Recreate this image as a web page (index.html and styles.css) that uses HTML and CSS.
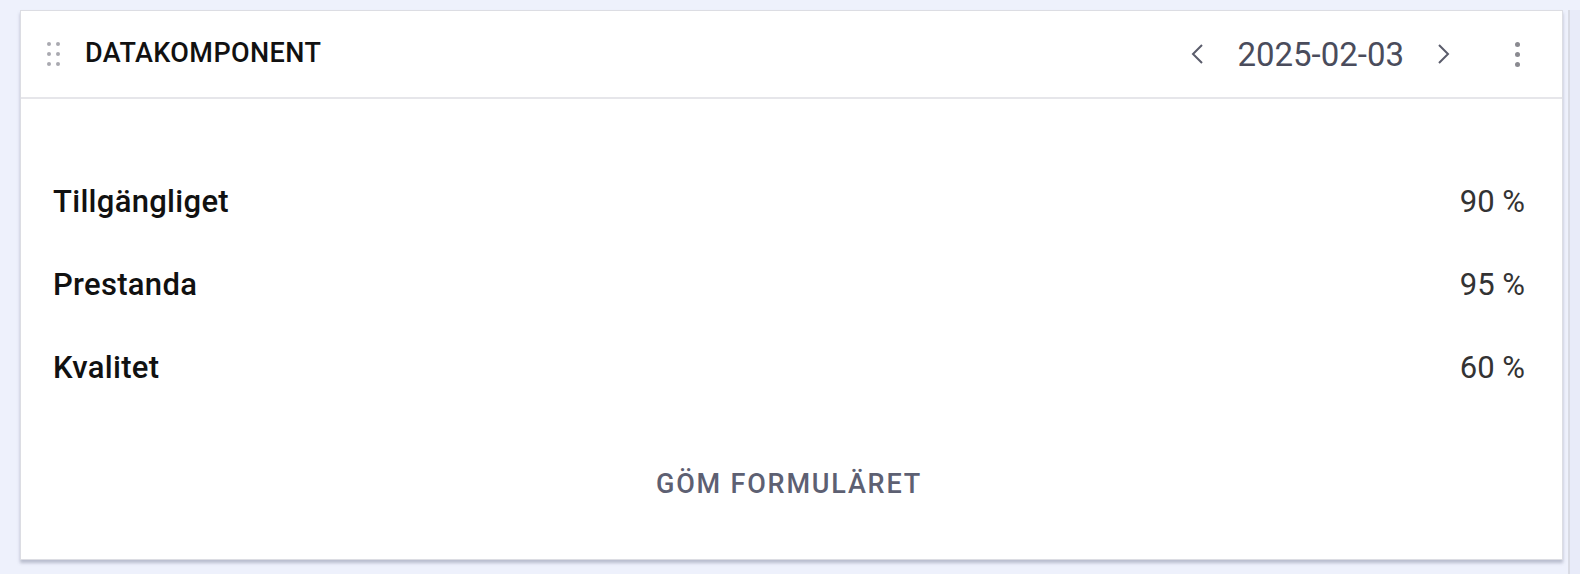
FILE: index.html
```html
<!DOCTYPE html>
<html lang="sv">
<head>
    <meta charset="UTF-8">
    <title>Datakomponent</title>
    <link rel="stylesheet" href="styles.css">
</head>
<body>
    <div class="page">
        <div class="card">
            <div class="card-header">
                <span class="handle">
                    <i></i><i></i><i></i><i></i><i></i><i></i>
                </span>
                <h2 class="title">DATAKOMPONENT</h2>
                <div class="date-nav">
                    <button class="arrow">
                        <svg width="16" height="24" viewBox="0 0 16 24"><path d="M13 3 L4 12 L13 21" fill="none" stroke="#5a5c6b" stroke-width="2"/></svg>
                    </button>
                    <span class="date">2025-02-03</span>
                    <button class="arrow">
                        <svg width="16" height="24" viewBox="0 0 16 24"><path d="M3 3 L12 12 L3 21" fill="none" stroke="#5a5c6b" stroke-width="2"/></svg>
                    </button>
                </div>
                <button class="more">
                    <i></i><i></i><i></i>
                </button>
            </div>
            <div class="card-body">
                <div class="row"><span class="label">Tillgängliget</span><span class="value">90 %</span></div>
                <div class="row"><span class="label">Prestanda</span><span class="value">95 %</span></div>
                <div class="row"><span class="label">Kvalitet</span><span class="value">60 %</span></div>
                <button class="toggle">GÖM FORMULÄRET</button>
            </div>
        </div>
        <div class="sidebar"></div>
    </div>
</body>
</html>
```

FILE: styles.css
```css
body {
    margin: 0;
    background: #eef1fc;
    font-family: Roboto, "Liberation Sans", sans-serif;
}
.page {
    display: flex;
    height: 574px;
    padding: 10px 0 0 20px;
    box-sizing: border-box;
}
.card {
    width: 1543px;
    height: 550px;
    background: #fff;
    border: 1px solid #dcdde3;
    box-sizing: border-box;
    box-shadow: 0 3px 3px rgba(90, 95, 120, 0.35);
}
.sidebar {
    margin-left: 5px;
    flex: 1;
    background: #e8ebf9;
    border-left: 2px solid #d9dbe4;
}
.card-header {
    display: flex;
    align-items: center;
    height: 86px;
    padding: 0 42px 0 26px;
    border-bottom: 2px solid #e6e6ea;
}
.handle {
    display: grid;
    grid-template-columns: 4px 4px;
    gap: 6px 5px;
    margin-right: 25px;
}
.handle i {
    width: 4px;
    height: 4px;
    border-radius: 50%;
    background: #a9a9b0;
}
.title {
    margin: 0 0 3px;
    font-size: 27px;
    font-weight: 500;
    color: #111;
    letter-spacing: 0.4px;
}
.date-nav {
    display: flex;
    align-items: center;
    margin-left: auto;
}
button {
    background: none;
    border: none;
    padding: 0;
    font-family: inherit;
    cursor: pointer;
}
.arrow {
    display: flex;
    padding: 0;
}
.date {
    font-size: 33px;
    color: #4a4c5c;
    margin: 0 32px;
}
.more {
    display: flex;
    flex-direction: column;
    gap: 5px;
    margin-left: 63px;
}
.more i {
    width: 5px;
    height: 5px;
    border-radius: 50%;
    background: #8a8a90;
}
.card-body {
    display: flex;
    flex-direction: column;
    padding: 77px 37px 0 32px;
}
.row {
    display: flex;
    justify-content: space-between;
    align-items: center;
    height: 83px;
    margin-top: -16px;
}
.row + .row {
    margin-top: 0;
}
.label {
    font-size: 31px;
    font-weight: 500;
    color: #111;
    letter-spacing: 0.3px;
}
.value {
    font-size: 31px;
    color: #333;
}
.toggle {
    align-self: center;
    margin-top: 59px;
    font-size: 27px;
    font-weight: 500;
    letter-spacing: 1.8px;
    color: #5d6072;
}
```
